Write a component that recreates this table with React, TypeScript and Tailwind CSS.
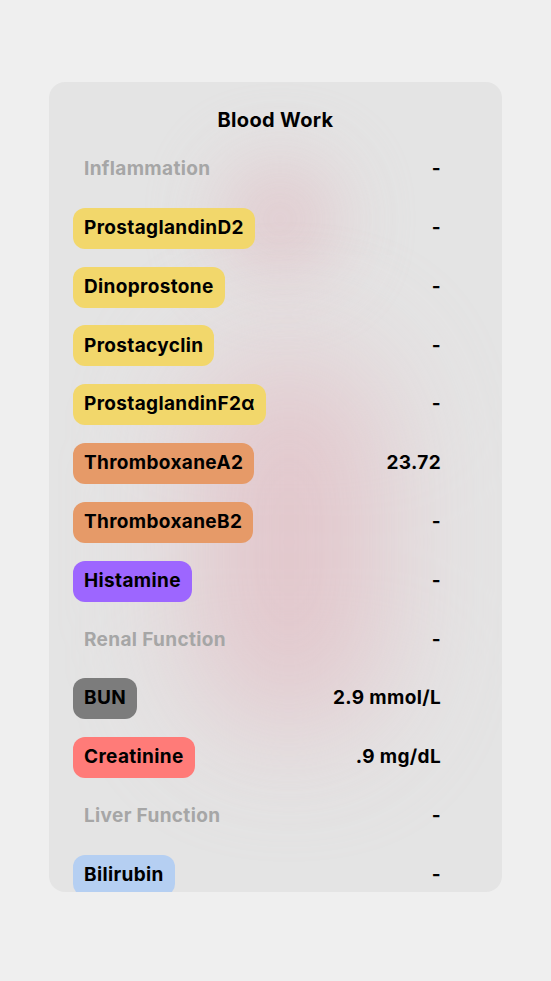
const rows: { label: string; value: string; color?: string }[] = [
  { label: 'Inflammation', value: '-' },
  { label: 'ProstaglandinD2', value: '-', color: 'bg-[#f2d76b]' },
  { label: 'Dinoprostone', value: '-', color: 'bg-[#f2d76b]' },
  { label: 'Prostacyclin', value: '-', color: 'bg-[#f2d76b]' },
  { label: 'ProstaglandinF2α', value: '-', color: 'bg-[#f2d76b]' },
  { label: 'ThromboxaneA2', value: '23.72', color: 'bg-[#e69a68]' },
  { label: 'ThromboxaneB2', value: '-', color: 'bg-[#e69a68]' },
  { label: 'Histamine', value: '-', color: 'bg-[#9d66ff]' },
  { label: 'Renal Function', value: '-' },
  { label: 'BUN', value: '2.9 mmol/L', color: 'bg-[#7c7c7c]' },
  { label: 'Creatinine', value: '.9 mg/dL', color: 'bg-[#ff7b78]' },
  { label: 'Liver Function', value: '-' },
  { label: 'Bilirubin', value: '-', color: 'bg-[#b5cff2]' },
]

export default function App() {
  return (
    <div className="min-h-[981px] bg-[#efefef] pt-[82px] px-[49px] font-['Inter',sans-serif] tracking-[0.35px]">
      <div className="relative h-[810px] overflow-hidden rounded-2xl bg-[#e4e4e4]">
        {/* soft pink glows */}
        <div className="absolute left-[176px] top-[82px] h-[110px] w-[110px] rounded-full bg-[#e0bfc5] opacity-80 blur-2xl" />
        <div className="absolute left-[150px] top-[270px] h-[380px] w-[180px] rounded-full bg-[#e2bdc4] opacity-80 blur-3xl" />

        <div className="relative flex flex-col">
          <h1 className="pt-[24px] text-center text-[20px] font-bold leading-[28px] text-black">Blood Work</h1>
          <div className="mt-[15px] flex flex-col gap-[17.8px] pl-[24px] pr-[61px]">
            {rows.map((r, i) => (
              <div key={i} className="flex h-[41px] items-center justify-between">
                {r.color ? (
                  <span className={`${r.color} flex h-[41px] items-center rounded-xl px-[11px] text-[19px] font-bold text-black`}>
                    {r.label}
                  </span>
                ) : (
                  <span className="px-[11px] text-[19px] font-bold text-[#a6a6a6]">{r.label}</span>
                )}
                <span className="text-[19px] font-bold text-black">{r.value}</span>
              </div>
            ))}
          </div>
        </div>
      </div>
    </div>
  )
}
